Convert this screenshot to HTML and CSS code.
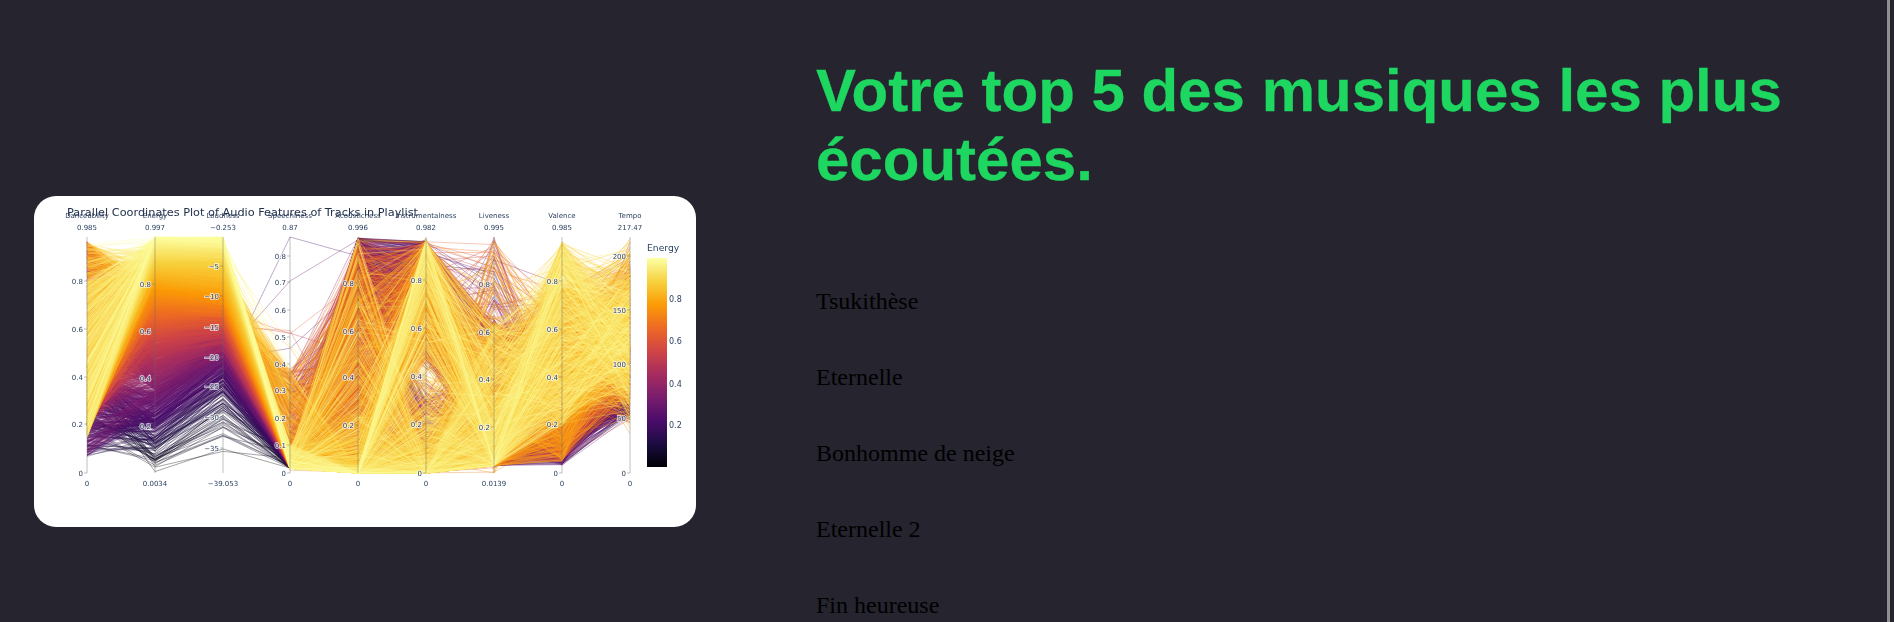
FILE: index.html
```html
<!DOCTYPE html>
<html lang="fr">
<head>
    <meta charset="UTF-8">
    <meta name="viewport" content="width=device-width, initial-scale=1.0">
    <title>Votre top 5</title>
    <link rel="stylesheet" href="styles.css">
</head>
<body>

<div class="page">
    <div class="chart-col">
        <div class="chart-card" id="chart-card">
            <canvas id="chart-lines" width="662" height="331"></canvas>
            <svg id="chart-labels" width="662" height="331" viewBox="0 0 662 331"></svg>
        </div>
    </div>
    <div class="top-col">
        <h1>Votre top 5 des musiques les plus écoutées.</h1>
        <div class="top-list">
            <p>Tsukithèse</p>
            <p>Eternelle</p>
            <p>Bonhomme de neige</p>
            <p>Eternelle 2</p>
            <p>Fin heureuse</p>
        </div>
    </div>
</div>
<div class="scroll-strip"></div>

<script src="chart.js"></script>
</body>
</html>
```

FILE: styles.css
```css
html {
    overflow: hidden;
}

body {
    margin: 0;
    background-color: #25242f;
    color: #000;
    font-family: "Liberation Serif", serif;
}

.page {
    display: grid;
    grid-template-columns: 816px 1fr;
    min-height: 722px;
}

.chart-col {
    display: flex;
    align-items: center;
    padding-left: 34px;
}

.chart-card {
    position: relative;
    width: 662px;
    height: 331px;
    background-color: #fff;
    border-radius: 22px;
    overflow: hidden;
}

#chart-lines {
    display: block;
    filter: blur(0.45px);
}

#chart-labels {
    position: absolute;
    top: 0;
    left: 0;
    font-family: "DejaVu Sans", sans-serif;
    filter: blur(0.3px);
}

.tick-label {
    font-size: 7px;
    fill: #2a3f5f;
    paint-order: stroke;
    stroke: rgba(255, 255, 255, 0.75);
    stroke-width: 1.6px;
}

.dim-label {
    font-size: 7px;
    fill: #2a3f5f;
}

.plot-title {
    font-size: 11.3px;
    fill: #22314c;
}

.bar-title {
    font-size: 9.2px;
    fill: #2a3f5f;
}

.bar-tick {
    font-size: 8px;
    fill: #2a3f5f;
}

.axis-line {
    stroke: rgba(105, 105, 105, 0.38);
    stroke-width: 1.1px;
}

.top-col {
    padding-top: 56px;
    padding-right: 60px;
}

h1 {
    margin: 0 0 93px;
    color: #1ed760;
    font-family: "Liberation Sans", sans-serif;
    font-size: 60px;
    font-weight: bold;
    -webkit-text-stroke: 0.3px #1ed760;
}

.top-list {
    display: flex;
    flex-direction: column;
    gap: 48px;
}

.top-list p {
    margin: 0;
    font-size: 24px;
    line-height: 28px;
}

.scroll-strip {
    position: fixed;
    top: 0;
    right: 4px;
    bottom: 0;
    width: 3px;
    background-color: #8f8f8f;
}
```

FILE: chart.js
```js
// Parallel coordinates: the tracks are generated, a seeded random keeps the picture stable
let seed = 20240117;
function rnd() {
    seed = (seed * 1664525 + 1013904223) >>> 0;
    return seed / 4294967296;
}

const TOP = 41, BOTTOM = 277;
const AXES = [
    { x: 53, name: 'Danceability', max: '0.985', min: '0', ticks: [['0.8', 85], ['0.6', 133], ['0.4', 181], ['0.2', 228], ['0', 277]] },
    { x: 121, name: 'Energy', max: '0.997', min: '0.0034', ticks: [['0.8', 88], ['0.6', 135], ['0.4', 182], ['0.2', 230]] },
    { x: 189, name: 'Loudness', max: '−0.253', min: '−39.053', ticks: [['−5', 70], ['−10', 100], ['−15', 131], ['−20', 161], ['−25', 190], ['−30', 221], ['−35', 252]] },
    { x: 256, name: 'Speechiness', max: '0.87', min: '0', ticks: [['0.8', 60], ['0.7', 86], ['0.6', 114], ['0.5', 141], ['0.4', 168], ['0.3', 194], ['0.2', 222], ['0.1', 249], ['0', 277]] },
    { x: 324, name: 'Acousticness', max: '0.996', min: '0', ticks: [['0.8', 87], ['0.6', 135], ['0.4', 181], ['0.2', 229]] },
    { x: 392, name: 'Instrumentalness', max: '0.982', min: '0', ticks: [['0.8', 84], ['0.6', 132], ['0.4', 180], ['0.2', 228], ['0', 277]] },
    { x: 460, name: 'Liveness', max: '0.995', min: '0.0139', ticks: [['0.8', 88], ['0.6', 136], ['0.4', 183], ['0.2', 231]] },
    { x: 528, name: 'Valence', max: '0.985', min: '0', ticks: [['0.8', 85], ['0.6', 133], ['0.4', 181], ['0.2', 228], ['0', 277]] },
    { x: 596, name: 'Tempo', max: '217.47', min: '0', ticks: [['200', 60], ['150', 114], ['100', 168], ['50', 222], ['0', 277]] }
];

const INFERNO = ['#000004', '#1b0c41', '#4a0c6b', '#781c6d', '#a52c60', '#cf4446', '#ed6925', '#fb9b06', '#f7d13d', '#fcffa4'];

function hexToRgb(hex) {
    return [1, 3, 5].map(i => parseInt(hex.substr(i, 2), 16));
}

function inferno(v) {
    const p = Math.min(0.9999, Math.max(0, v)) * (INFERNO.length - 1);
    const i = Math.floor(p);
    const a = hexToRgb(INFERNO[i]), b = hexToRgb(INFERNO[i + 1]);
    return a.map((c, k) => Math.round(c + (b[k] - c) * (p - i)));
}

function lerpTable(table, v) {
    for (let i = 1; i < table.length; i++) {
        if (v <= table[i][0]) {
            const t = (v - table[i - 1][0]) / (table[i][0] - table[i - 1][0]);
            return table[i - 1][1] + (table[i][1] - table[i - 1][1]) * t;
        }
    }
    return table[table.length - 1][1];
}

const LOUD_Y = [[0, 250], [0.1, 205], [0.2, 180], [0.3, 160], [0.5, 138], [0.7, 112], [0.8, 95], [0.9, 65], [1, 43]];
// power used on the acousticness: loud tracks stay near 0
const ACOUSTIC_POW = [[0, 0.1], [0.3, 0.2], [0.6, 1.2], [0.8, 3.5], [0.9, 7], [1, 18]];

function frac(v) {
    return BOTTOM - Math.min(1, Math.max(0, v)) * (BOTTOM - TOP);
}

// one track: y position on each axis, all of them depend on the energy
function makeTrack() {
    const e = Math.max(0.004, Math.pow(rnd(), 0.5));
    const low = e < 0.35;
    const ys = [];

    let dance;
    if (low) dance = 0.07 + rnd() * 0.4;
    else if (e < 0.8) dance = 0.2 + rnd() * 0.78;
    else if (rnd() < 0.07) dance = 0.8 + rnd() * 0.18;
    else dance = 0.15 + rnd() * 0.66;
    ys.push(frac(dance));

    ys.push(frac(e));

    ys.push(lerpTable(LOUD_Y, e) + (rnd() - 0.5) * (6 + (1 - e) * 30));

    let speech = Math.pow(rnd(), 3) * 0.1 + 0.02;
    if (!low && e < 0.9 && rnd() < 0.14) speech = 0.1 + rnd() * 0.34;
    if (rnd() < 0.006) speech = rnd() * 0.65;
    ys.push(frac(speech));

    ys.push(frac(Math.min(0.995, Math.pow(rnd(), lerpTable(ACOUSTIC_POW, e)))));

    let inst;
    const r = rnd();
    const high = e > 0.85 ? 0.3 : (e > 0.6 ? 0.5 : 0.62);
    if (r < high) inst = 0.98 - Math.pow(rnd(), 2) * 0.5;
    else if (r < high + 0.14) inst = rnd();
    else inst = Math.pow(rnd(), 5) * 0.3;
    ys.push(frac(inst));

    let live = 0.03 + Math.pow(rnd(), 2.2) * 0.6;
    if (e < 0.9 && rnd() < 0.1) live = rnd();
    ys.push(frac(live));

    let val;
    if (low) val = 0.03 + rnd() * 0.25;
    else if (e > 0.85) val = 0.2 + rnd() * 0.78;
    else val = 0.05 + rnd() * 0.75;
    ys.push(frac(Math.min(0.985, val)));

    let bpm;
    if (low && rnd() < 0.6) bpm = 52 + rnd() * 26;
    else if (e < 0.7 && rnd() < 0.55) bpm = 68 + rnd() * 48;
    else bpm = 128 + (rnd() + rnd() + rnd() - 1.5) * 66;
    ys.push(frac(Math.min(216, bpm) / 217.47));

    return { e, ys, order: e + rnd() * 0.3 };
}

const tracks = [];
for (let i = 0; i < 3400; i++) tracks.push(makeTrack());
// a few far away tracks, on the sparse speechiness axis
tracks.push({ e: 0.22, order: 0, ys: [frac(0.1), frac(0.22), 180, 41, 60, 44, 260, 250, 200] });
tracks.push({ e: 0.3, order: 0, ys: [frac(0.15), frac(0.3), 160, 85, 44, 48, 250, 240, 210] });
tracks.sort((a, b) => a.order - b.order);

const ctx = document.getElementById('chart-lines').getContext('2d');
ctx.lineJoin = 'round';
tracks.forEach(t => {
    const c = inferno(t.e);
    ctx.strokeStyle = `rgba(${c[0]}, ${c[1]}, ${c[2]}, ${t.e < 0.12 ? 0.4 : 0.5})`;
    ctx.lineWidth = t.e < 0.12 ? 0.9 : 0.7;
    ctx.beginPath();
    t.ys.forEach((y, i) => {
        if (i === 0) ctx.moveTo(AXES[i].x, y);
        else ctx.lineTo(AXES[i].x, y);
    });
    ctx.stroke();
});

// colour bar
const BAR_TOP = 62, BAR_BOTTOM = 271;
for (let y = BAR_TOP; y < BAR_BOTTOM; y++) {
    const c = inferno((BAR_BOTTOM - y) / (BAR_BOTTOM - BAR_TOP));
    ctx.fillStyle = `rgb(${c[0]}, ${c[1]}, ${c[2]})`;
    ctx.fillRect(613, y, 20, 1);
}

const svg = document.getElementById('chart-labels');

function addText(cls, x, y, str, anchor) {
    const t = document.createElementNS('http://www.w3.org/2000/svg', 'text');
    t.setAttribute('class', cls);
    t.setAttribute('x', x);
    t.setAttribute('y', y);
    t.setAttribute('text-anchor', anchor || 'start');
    t.textContent = str;
    svg.appendChild(t);
}

function addLine(x1, y1, x2, y2) {
    const l = document.createElementNS('http://www.w3.org/2000/svg', 'line');
    l.setAttribute('class', 'axis-line');
    l.setAttribute('x1', x1);
    l.setAttribute('y1', y1);
    l.setAttribute('x2', x2);
    l.setAttribute('y2', y2);
    svg.appendChild(l);
}

AXES.forEach(a => {
    addLine(a.x, TOP, a.x, BOTTOM);
    addText('dim-label', a.x, 22, a.name, 'middle');
    addText('dim-label', a.x, 33.5, a.max, 'middle');
    addText('dim-label', a.x, 290, a.min, 'middle');
    a.ticks.forEach(t => {
        addLine(a.x - 3, t[1], a.x, t[1]);
        addText('tick-label', a.x - 4, t[1] + 2.5, t[0], 'end');
    });
});

addText('plot-title', 33, 20, 'Parallel Coordinates Plot of Audio Features of Tracks in Playlist');
addText('bar-title', 613, 55, 'Energy');
[['0.8', 103], ['0.6', 145], ['0.4', 188], ['0.2', 229]].forEach(t => {
    addText('bar-tick', 635, t[1] + 3, t[0]);
});
```
